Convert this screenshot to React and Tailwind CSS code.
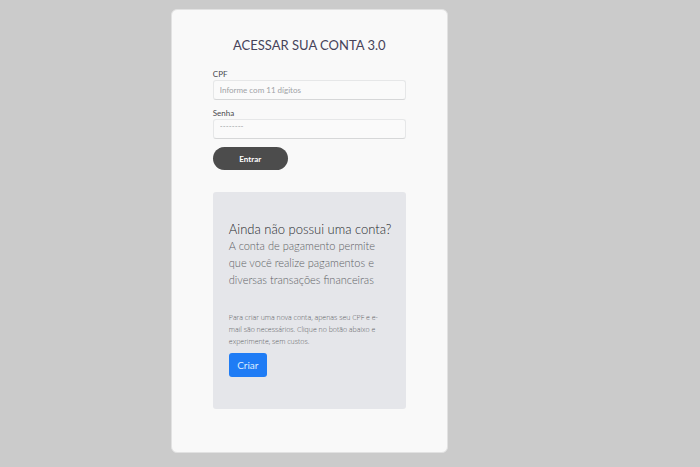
import React from "react";

function Field({ id, label, type, placeholder, inputClass }) {
  return (
    <div className="flex flex-col">
      <label htmlFor={id} className="text-[8px] leading-[12px] text-[#4a4a4e]">
        {label}
      </label>
      <input
        id={id}
        type={type}
        placeholder={placeholder}
        className={`h-5 w-full rounded-[3px] border border-[#e6e7e8] border-b-[#d6d7d8] bg-[#fafafa] px-[6px] text-[8px] text-[#555] placeholder:text-[#a0a2a6] ${inputClass}`}
      />
    </div>
  );
}

export default function App() {
  return (
    <main className="min-h-screen bg-[#cbcbcb] py-[9px] pl-[24.4%] font-['Lato','Open_Sans',sans-serif]">
      <section className="w-full max-w-[277px] rounded-md border border-[#e2e2e2] bg-[#f9f9f9] px-[41px] pt-[26px] pb-[43px]">
        <h1 className="text-center text-[13px] leading-[18px] whitespace-nowrap text-[#46435a]">
          ACESSAR SUA CONTA 3.0
        </h1>
        <form className="mt-[14px]" onSubmit={(e) => e.preventDefault()}>
          <div className="flex flex-col gap-[7px]">
            <Field id="cpf" label="CPF" type="text" placeholder="Informe com 11 dígitos" inputClass="" />
            <Field id="senha" label="Senha" type="password" placeholder="--------" inputClass="pb-[6px]" />
          </div>
          <button
            type="submit"
            className="mt-2 block h-[23px] w-[75px] rounded-full bg-[#4c4c4c] text-[8px] font-bold text-white"
          >
            Entrar
          </button>
        </form>
        <aside className="mt-[22px] rounded-[3px] bg-[#e5e6ea] px-4 pt-[30px] pb-8">
          <h2 className="text-[13px] leading-[15px] font-light whitespace-nowrap text-[#26282c]">
            Ainda não possui uma conta?
          </h2>
          <p className="text-[11px] leading-[17px] font-light text-[#606165]">
            A conta de pagamento permite
            <br />
            que você realize pagamentos e
            <br />
            diversas transações financeiras
          </p>
          <p className="mt-6 font-['Open_Sans',sans-serif] text-[7px] leading-[12px] font-light whitespace-nowrap text-[#606165]">
            Para criar uma nova conta, apenas seu CPF e e-
            <br />
            mail são necessários. Clique no botão abaixo e
            <br />
            experimente, sem custos.
          </p>
          <button
            type="button"
            className="mt-[5px] block h-6 w-[38px] rounded-[3px] bg-[#1f7cf5] text-[10px] text-[#dcebff]"
          >
            Criar
          </button>
        </aside>
      </section>
    </main>
  );
}
